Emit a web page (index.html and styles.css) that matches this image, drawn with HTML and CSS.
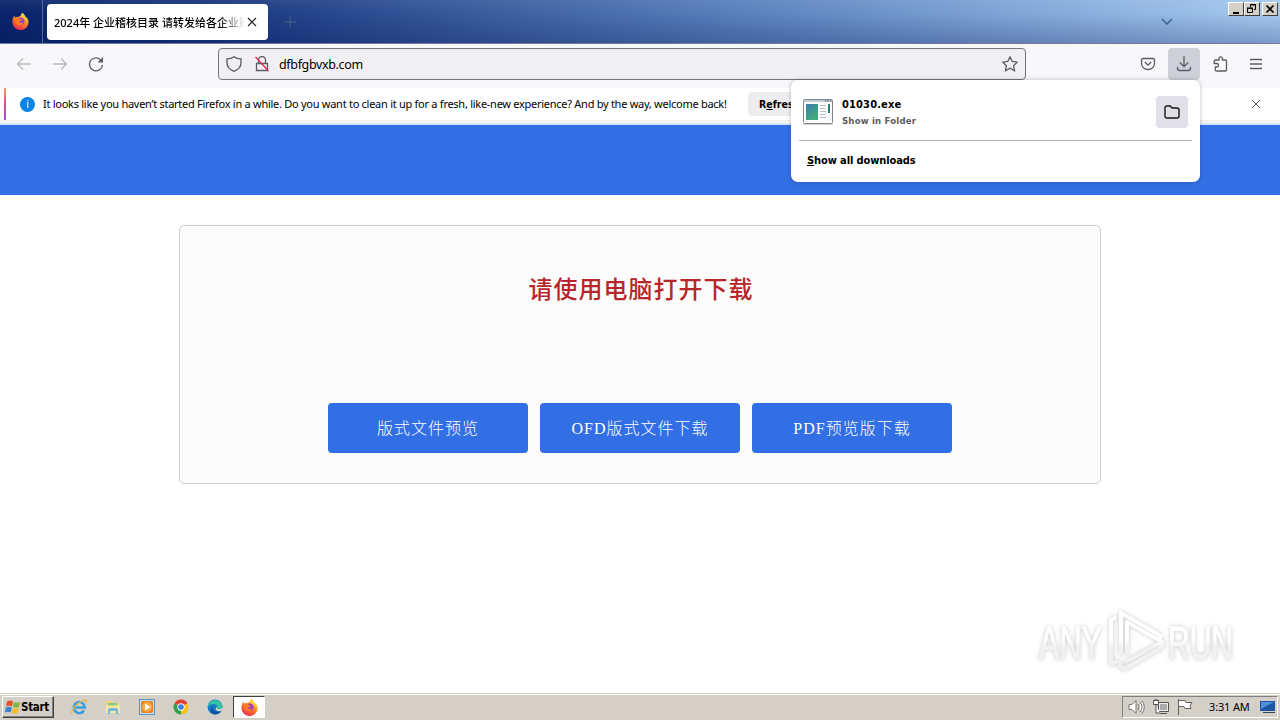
FILE: index.html
```html
<!DOCTYPE html>
<html lang="zh-CN">
<head>
    <meta charset="UTF-8">
    <meta name="viewport" content="width=device-width, initial-scale=1.0">
    <title>2024年 企业稽核目录 请转发给各企业</title>
    <link rel="stylesheet" href="styles.css">
</head>
<body>
    <svg class="defs" width="0" height="0">
        <defs>
            <linearGradient id="flame" x1="0.8" y1="0" x2="0.3" y2="1">
                <stop offset="0" stop-color="#ffe14a"/>
                <stop offset="0.45" stop-color="#ff8a1f"/>
                <stop offset="1" stop-color="#f0284f"/>
            </linearGradient>
            <symbol id="firefox" viewBox="0 0 16 16">
                <path d="M9.5 0c2 1 2.4 2.2 2.7 3.2 2 1 3.4 3 3.4 5.4A7.6 7.4 0 0 1 .4 8.7C.4 6 1 4.4 2.3 2.7L3 4.300l1.600-.6C6 4 7 3 8 2.500Z" fill="url(#flame)"/>
                <circle cx="8.200" cy="7.800" r="3.600" fill="#9b45c4"/>
                <path d="M2.500 5c2-1.200 4-.8 5 .8l2 .2c-.3 1.200-2 1.200-2.800 2 .4 1.700 2.600 2 4 1-.8 3-5.700 3.300-7.400.2Z" fill="#ff7a22"/>
                <path d="M9.500 0c2 1 2.400 2.200 2.700 3.200 2.300 1.300 3 4 2.200 6-.3-2.200-1.400-3.500-3-4.300C9 4 8.500 2 9.500 0Z" fill="#ffd43c"/>
            </symbol>
        </defs>
    </svg>

    <div class="titlebar">
        <div class="view-button"><svg width="17" height="17"><use href="#firefox"/></svg></div>
        <div class="tab">
            <span class="tab-label">2024年 企业稽核目录 请转发给各企业财</span>
            <svg class="tab-close" width="10" height="10" viewBox="0 0 10 10"><path d="M1 1l8 8M9 1L1 9"/></svg>
        </div>
        <svg class="new-tab" width="12" height="12" viewBox="0 0 12 12"><path d="M6 0v12M0 6h12"/></svg>
        <svg class="tab-list" width="12" height="8" viewBox="0 0 12 8"><path d="M1 1l5 5 5-5"/></svg>
        <div class="window-buttons">
            <span class="win-btn"><svg width="12" height="10" viewBox="0 0 12 10"><path d="M3 9h6" stroke-width="2"/></svg></span>
            <span class="win-btn"><svg width="12" height="10" viewBox="0 0 12 10"><path d="M4.500 3.500v-3h5v5H8M4 1h6M1.500 4.500h5v4h-5zM1 4h6"/></svg></span>
            <span class="win-btn win-close"><svg width="12" height="10" viewBox="0 0 12 10"><path d="M2.500 1.500l7 7M9.500 1.500l-7 7" stroke-width="1.700"/></svg></span>
        </div>
    </div>

    <div class="toolbar">
        <div class="nav-buttons">
            <svg class="icon disabled" width="16" height="16" viewBox="0 0 16 16"><path d="M15 8H1.500M7 2.500L1.500 8 7 13.500"/></svg>
            <svg class="icon disabled" width="16" height="16" viewBox="0 0 16 16"><path d="M1 8h13.500M9 2.500L14.500 8 9 13.500"/></svg>
            <svg class="icon" width="16" height="16" viewBox="0 0 16 16"><path d="M13.500 4.800A6.500 6.500 0 1 0 14.500 9"/><path d="M15 1v5.500H9.500z" class="solid"/></svg>
        </div>
        <div class="urlbar">
            <svg class="icon" width="16" height="16" viewBox="0 0 16 16"><path d="M8 .8C6.200 2.200 3.500 2.900 1 2.900V7c0 3.800 3 6.800 7 8.300 4-1.500 7-4.500 7-8.300V2.900C12.500 2.900 9.800 2.200 8 .8Z"/></svg>
            <svg class="icon" width="16" height="16" viewBox="0 0 16 16"><path d="M4.500 7V4a3.500 3.500 0 0 1 7 0v3M2.500 7.500h11v7h-11z"/><path class="slash" d="M1.500 1l13 14"/></svg>
            <span class="url">dfbfgbvxb.com</span>
            <svg class="icon" width="16" height="16" viewBox="0 0 16 16"><path d="M8 .9l2.200 4.600 5 .7-3.600 3.500.9 5L8 12.300l-4.500 2.400.9-5L.8 6.200l5-.7Z"/></svg>
        </div>
        <div class="tool-buttons">
            <span class="tool"><svg class="icon" width="16" height="16" viewBox="0 0 16 16"><path d="M3 2.500h10q1.500 0 1.500 1.500V7.500A6.500 6 0 0 1 1.500 7.500V4Q1.500 2.500 3 2.500ZM4.800 6L8 9l3.200-3"/></svg></span>
            <span class="tool active"><svg class="icon" width="16" height="16" viewBox="0 0 16 16"><path d="M8 0v10.500M3.800 6.500L8 10.700l4.200-4.200M1.500 11v1.500q0 2 2 2h9q2 0 2-2V11"/></svg></span>
            <span class="tool"><svg class="icon" width="16" height="16" viewBox="0 0 16 16"><path d="M7 4V2.500a1.700 1.700 0 0 1 3.400 0V4h3q1.100 0 1.100 1.100v8.800q0 1.100-1.100 1.100H4.500q-1.200 0-1.200-1.200V11h1.400a1.700 1.700 0 0 0 0-3.500H2.200V5.200Q2.200 4 3.400 4Z"/></svg></span>
            <span class="tool"><svg class="icon" width="16" height="16" viewBox="0 0 16 16"><path d="M2 3.500h12M2 8h12M2 12.500h12"/></svg></span>
        </div>
    </div>

    <div class="infobar">
        <span class="info-icon">i</span>
        <span class="info-text">It looks like you haven’t started Firefox in a while. Do you want to clean it up for a fresh, like-new experience? And by the way, welcome back!</span>
        <button class="refresh">R<u>e</u>fresh</button>
        <svg class="info-close" width="10" height="10" viewBox="0 0 10 10"><path d="M1 1l8 8M9 1L1 9"/></svg>
    </div>

    <div class="downloads">
        <div class="download-item">
            <svg class="exe" width="30" height="26" viewBox="0 0 30 26">
                <defs>
                    <linearGradient id="pane" x1="0" y1="0" x2="0.6" y2="1"><stop offset="0" stop-color="#3c7fae"/><stop offset="1" stop-color="#43ac78"/></linearGradient>
                </defs>
                <rect x=".5" y=".5" width="29" height="24" rx="1" fill="#fafcfd" stroke="#80868c"/>
                <path d="M1 2h28" stroke="#c3ccd3" stroke-width="2"/>
                <path d="M22 2h1.500M24.500 2H26M27 2h1.500" stroke="#4c5a66"/>
                <rect x="3" y="5" width="12" height="16" fill="url(#pane)"/>
                <path d="M17 6.500h6M17 9.500h5M17 12.500h6M17 15.500h5M17 18.500h6" stroke="#b9bdc0"/>
                <rect x="25" y="5" width="2" height="9" fill="#2d7a80"/>
                <path d="M0 25.500h30" stroke="#cfcfcf"/>
            </svg>
            <div class="download-text">
                <div class="file-name">01030.exe</div>
                <div class="file-action">Show in Folder</div>
            </div>
            <span class="folder"><svg width="16" height="16" viewBox="0 0 16 16"><path d="M3 2h3.200l2 2H13q2 0 2 2v6q0 2-2 2H3q-2 0-2-2V4q0-2 2-2Z"/></svg></span>
        </div>
        <div class="show-all"><u>S</u>how all downloads</div>
    </div>

    <div class="page">
        <div class="banner"></div>
        <div class="card">
            <h1>请使用电脑打开下载</h1>
            <div class="buttons">
                <a class="btn">版式文件预览</a>
                <a class="btn">OFD版式文件下载</a>
                <a class="btn">PDF预览版下载</a>
            </div>
        </div>
    </div>

    <svg class="watermark" width="214" height="74" viewBox="0 0 214 74">
        <defs>
            <linearGradient id="fade" gradientUnits="userSpaceOnUse" x1="0" y1="10" x2="0" y2="64">
                <stop offset="0.45" stop-color="#fff"/>
                <stop offset="0.6" stop-color="#f1f1f1"/>
            </linearGradient>
        </defs>
        <g class="mark" fill="url(#fade)" stroke="url(#fade)">
            <text x="9" y="54" textLength="63" lengthAdjust="spacingAndGlyphs">ANY</text>
            <text x="138" y="54" textLength="65" lengthAdjust="spacingAndGlyphs">RUN</text>
            <path fill="none" d="M86 12l-5 3v44l7-3M91 50V8l40 23-2 4-32-18v32M90 56v6l4 2 38-22v-5L96 57"/>
        </g>
    </svg>

    <div class="taskbar">
        <div class="start">
            <svg width="16" height="16" viewBox="0 0 16 16">
                <path d="M2 2.500Q5 .5 8 2.500L7 7.500Q4 6 1 7.500Z" fill="#e5532d"/>
                <path d="M9 3q3 1.500 6 0l-1 5q-3 1.500-6 0Z" fill="#7fb83c"/>
                <path d="M.8 8.500q3-1.500 6 0l-1 5q-3-1.500-6 0Z" fill="#3b82cf"/>
                <path d="M7.800 9q3 1.500 6 0l-1 5q-3 1.500-6 0Z" fill="#f5bd2c"/>
            </svg>
            <span>Start</span>
        </div>
        <div class="launchers">
            <svg width="16" height="16" viewBox="0 0 16 16"><path d="M13 11.500A5.500 5.500 0 1 1 13.800 8.500H4" fill="none" stroke="#3a9de0" stroke-width="2.500"/><path d="M1 15C-1 11 9 1 15 1.200c1 .6.500 2-.2 3" fill="none" stroke="#e3bb3f" stroke-width="1.200"/></svg>
            <svg width="16" height="16" viewBox="0 0 16 16"><path d="M1 2h5l1 1.500h7V14H1z" fill="#f1d574"/><path d="M3 4h9v3H3z" fill="#8ac98a"/><path d="M1 6.500h14V14H1z" fill="#f8e6a0"/><path d="M3 15v-4q0-2 2-2h6q2 0 2 2v4h-2v-3H5v3z" fill="#70b9e0"/></svg>
            <svg width="16" height="16" viewBox="0 0 16 16"><rect x=".5" y=".5" width="15" height="15" fill="#bfdcf2" stroke="#5d95c4"/><rect x="2" y="2" width="12" height="12" rx="2" fill="#ef8318"/><circle cx="8" cy="8" r="5" fill="#f9a944"/><path d="M6 4.500v7L11.500 8z" fill="#fff"/></svg>
            <svg width="16" height="16" viewBox="0 0 16 16"><path d="M8 8L1.500 4.200A7.500 7.500 0 0 1 14.500 4.200Z" fill="#e04033"/><path d="M8 8l6.500-3.800A7.500 7.500 0 0 1 8 15.500Z" fill="#fbc116"/><path d="M8 8v7.500A7.500 7.500 0 0 1 1.500 4.200Z" fill="#2fa14f"/><circle cx="8" cy="8" r="3.700" fill="#fff"/><circle cx="8" cy="8" r="2.800" fill="#3b7de9"/></svg>
            <svg width="16" height="16" viewBox="0 0 16 16"><circle cx="8" cy="8" r="7.500" fill="#1578c8"/><path d="M1 6C3 0 13-1 15.500 7c.2 4-5 4.500-6 3 2-3-.5-5-3-5C4 5 2 6 1 8Z" fill="#35c3a2"/><path d="M6 8c-1 4 4 6 8 4-2 4-8 4.500-10 1-1-2 0-4 2-5Z" fill="#124f9d"/><path d="M9.500 8q1.500 4 6 .8v2.700q-5 2-7-1Z" fill="#d4d0c8"/></svg>
        </div>
        <div class="task-active"><svg width="17" height="17"><use href="#firefox"/></svg></div>
        <div class="tray">
            <svg width="17" height="16" viewBox="0 0 17 16"><path d="M1 5.500h3l4-4v13l-4-4H1zM10 5q2 3 0 6M12 3q4 5 0 10M14 1.500q4.500 6.500 0 13" fill="#fff" stroke="#77746f"/></svg>
            <svg width="16" height="16" viewBox="0 0 16 16"><path d="M5.500 3.500h10v9h-10zM7 14.500h7" fill="#eee" stroke="#55534f"/><path d="M7 5h7v6H7z" fill="#aaa"/><path d="M.5 1.500h5v4h-5zM2 0v2M4 0v2M3 6v8h4" fill="#fff" stroke="#55534f"/></svg>
            <svg width="16" height="16" viewBox="0 0 16 16"><path d="M1.500 0v16M2 1.500h6l1 2h6l-2 3 1 3H8l-1-2H2" fill="#fff" stroke="#66635e"/></svg>
            <span class="clock">3:31 AM</span>
            <svg width="16" height="14" viewBox="0 0 16 14"><path d="M0 1h15v10H0z" fill="#1d55a4"/><path d="M1 2h13L1 9z" fill="#4e91d6"/><path d="M3 12.500h12" stroke="#31455e"/></svg>
        </div>
    </div>
</body>
</html>
```
FILE: styles.css
```css
* {
    box-sizing: border-box;
}

body {
    margin: 0;
    width: 1280px;
    height: 720px;
    overflow: hidden;
    display: flex;
    flex-direction: column;
    background: #fff;
    font-family: "DejaVu Sans Condensed", "DejaVu Sans", "Noto Sans CJK SC", sans-serif;
    font-size: 11px;
    color: #000;
}

svg {
    flex: none;
    fill: none;
}

.defs {
    position: absolute;
}

.titlebar {
    height: 44px;
    flex: none;
    display: flex;
    align-items: center;
    background: linear-gradient(rgba(255, 255, 255, 0.06), rgba(0, 15, 80, 0) 30%, rgba(0, 15, 80, 0.25)), linear-gradient(90deg, #0a246a, #18367d 16%, #5c83bf 59%, #a6caf0);
    border-bottom: 1px solid #6c7c9a;
}

.view-button {
    width: 43px;
    height: 43px;
    padding-right: 2px;
    display: flex;
    align-items: center;
    justify-content: center;
    border-right: 1px solid #56699c;
}

.tab {
    width: 221px;
    height: 36px;
    margin-left: 4px;
    padding: 0 11px 0 7px;
    display: flex;
    align-items: center;
    justify-content: space-between;
    background: #fff;
    border-radius: 4px;
}

.tab-label {
    width: 191px;
    overflow: hidden;
    white-space: nowrap;
    font-family: "Noto Sans", "Noto Sans CJK SC", sans-serif;
    font-size: 11px;
    font-weight: 500;
    line-height: 20px;
    padding-top: 2px;
    mask-image: linear-gradient(90deg, #000 165px, transparent 191px);
}

.tab-close,
.info-close {
    stroke: #222;
    stroke-width: 1.2;
}

.new-tab {
    margin-left: 16px;
    stroke: #4b6187;
}

.tab-list {
    margin-left: auto;
    margin-right: 55px;
    stroke: #3f608f;
    stroke-width: 1.5;
}

.window-buttons {
    display: flex;
    align-self: flex-start;
    margin: 2px 2px 0 0;
}

.win-btn {
    width: 16px;
    height: 14px;
    padding: 1px;
    background: #d4d0c8;
    border: 1px solid;
    border-color: #fff #404040 #404040 #fff;
    stroke: #000;
}

.win-close {
    margin-left: 2px;
}

.win-btn svg {
    display: block;
}

.toolbar {
    height: 44px;
    flex: none;
    display: flex;
    align-items: center;
    padding-bottom: 4px;
    background: #f8f8fb;
}

.icon {
    stroke: #5b5b66;
    stroke-width: 1.3;
}

.icon .solid {
    fill: #5b5b66;
    stroke: none;
}

.icon .slash {
    stroke: #e22850;
}

.disabled {
    opacity: 0.4;
}

.nav-buttons {
    width: 218px;
    padding-left: 16px;
    display: flex;
    gap: 20px;
}

.urlbar {
    width: 808px;
    height: 32px;
    padding: 0 7px;
    display: flex;
    align-items: center;
    gap: 12px;
    background: #f0f0f4;
    border: 1px solid #73737d;
    border-radius: 4px;
}

.url {
    flex: 1;
    margin-left: -3px;
    font-family: "Noto Sans", sans-serif;
    font-size: 12.5px;
    letter-spacing: -0.35px;
}

.tool-buttons {
    display: flex;
    gap: 4px;
    margin-left: 106px;
}

.tool {
    width: 32px;
    height: 32px;
    display: flex;
    align-items: center;
    justify-content: center;
    border-radius: 4px;
}

.tool.active {
    background: #cdd0d8;
}

.infobar {
    height: 37px;
    flex: none;
    display: flex;
    align-items: center;
    padding: 0 19px 5px 20px;
    position: relative;
    background: linear-gradient(#fff 32px, #f0eee2 32px, #f8f8f8 34px, #d6e6fb 36px);
}

.infobar::before {
    content: "";
    position: absolute;
    left: 4px;
    top: 0;
    width: 2px;
    height: 32px;
    background: linear-gradient(#ff9a63, #e74391 50%, #9b50db);
}

.info-icon {
    width: 15px;
    height: 15px;
    margin-right: 8px;
    border-radius: 50%;
    background: #0b84e5;
    color: #fff;
    text-align: center;
    line-height: 15px;
}

.info-text {
    width: 705px;
    padding-bottom: 2px;
    font-family: "Noto Sans", sans-serif;
    font-size: 11px;
    letter-spacing: -0.27px;
    white-space: nowrap;
}

.refresh {
    width: 120px;
    height: 24px;
    border: none;
    border-radius: 4px;
    background: #ededf0;
    padding: 0 11px;
    text-align: left;
    font-family: inherit;
    font-size: 10.5px;
    font-weight: bold;
}

.info-close {
    margin-left: auto;
    stroke: #555;
    stroke-width: 1;
}

.downloads {
    position: absolute;
    z-index: 2;
    left: 791px;
    top: 80px;
    width: 409px;
    height: 102px;
    padding: 8px;
    background: #fff;
    border-radius: 7px;
    box-shadow: 0 0 4px rgba(40, 40, 60, 0.3);
    font-weight: bold;
}

.download-item {
    height: 53px;
    padding: 0 4px 5px;
    display: flex;
    align-items: center;
    border-bottom: 1px solid #b4b4b8;
}

.download-text {
    flex: 1;
    margin-left: 9px;
    padding-top: 2px;
}

.file-name {
    font-size: 11px;
    line-height: 16px;
    letter-spacing: 0.15px;
}

.file-action {
    font-size: 9.5px;
    line-height: 16px;
    letter-spacing: 0.2px;
    color: #5b5b60;
}

.folder {
    width: 32px;
    height: 32px;
    padding: 8px;
    border-radius: 4px;
    background: #e0e0e6;
    stroke: #15141a;
    stroke-width: 1.4;
}

.folder svg {
    display: block;
}

.show-all {
    padding-left: 8px;
    line-height: 39px;
    letter-spacing: -0.1px;
}

.page {
    flex: 1;
}

.banner {
    height: 70px;
    background: #326ee4;
}

.card {
    width: 922px;
    height: 259px;
    margin: 30px auto 0;
    padding-top: 46px;
    background: #fcfcfc;
    border: 1px solid #ccc;
    border-radius: 5px;
    text-align: center;
}

h1 {
    height: 131px;
    margin: 0;
    padding-left: 2px;
    font-family: "Noto Sans CJK SC", sans-serif;
    font-size: 24px;
    line-height: 32px;
    font-weight: 500;
    letter-spacing: 1px;
    color: #b8262b;
}

.buttons {
    display: flex;
    justify-content: center;
    gap: 12px;
}

.btn {
    width: 200px;
    height: 50px;
    border-radius: 4px;
    background: #326ee4;
    color: #fff;
    font-family: "Liberation Serif", "Noto Sans CJK SC", serif;
    font-size: 16px;
    font-weight: 300;
    letter-spacing: 1px;
    line-height: 52px;
}

.watermark {
    position: absolute;
    left: 1030px;
    top: 605px;
}

.mark {
    filter: drop-shadow(0 0 2px rgba(0, 0, 0, 0.22));
}

.mark text {
    font-family: "Liberation Sans", sans-serif;
    font-size: 47px;
}

.mark path {
    stroke-width: 4;
    stroke-linejoin: round;
}

.taskbar {
    height: 27px;
    flex: none;
    display: flex;
    align-items: center;
    padding: 1px 2px 1px;
    background: #d4d0c8;
    border-top: 1px solid #d4d0c8;
    box-shadow: inset 0 1px #fff;
}

.start {
    width: 52px;
    height: 22px;
    padding-left: 2px;
    display: flex;
    align-items: center;
    border: 1px solid;
    border-color: #fff #404040 #404040 #fff;
    box-shadow: inset -1px -1px #808080;
    font-weight: bold;
    font-size: 11.5px;
    letter-spacing: -0.3px;
}

.launchers {
    display: flex;
    gap: 18px;
    margin-left: 17px;
}

.task-active {
    width: 32px;
    height: 22px;
    margin-left: 10px;
    display: flex;
    align-items: center;
    justify-content: center;
    background: #fff;
    border: 1px solid;
    border-color: #404040 #fff #fff #404040;
}

.tray {
    width: 156px;
    height: 22px;
    margin-left: auto;
    padding: 0 0 0 5px;
    display: flex;
    align-items: center;
    gap: 8px;
    border: 1px solid;
    border-color: #808080 #fff #fff #808080;
}

.clock {
    width: 43px;
    margin-left: 8px;
    padding-bottom: 1px;
    white-space: nowrap;
    font-family: "Noto Sans", sans-serif;
    font-size: 11px;
    letter-spacing: -0.15px;
}
```
